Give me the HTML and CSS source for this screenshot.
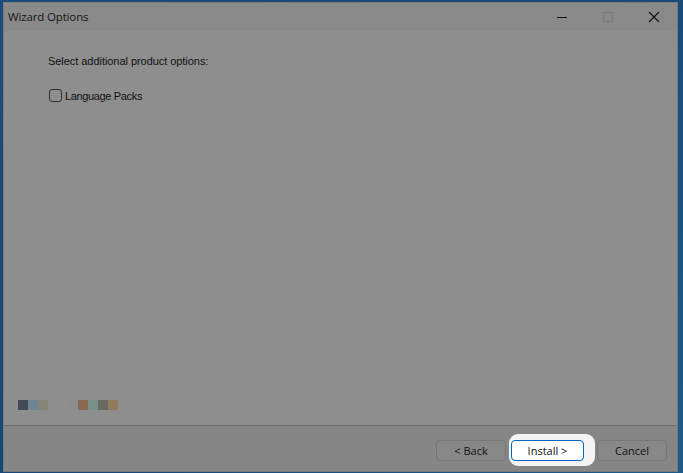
FILE: index.html
```html
<!DOCTYPE html>
<html>
<head>
<meta charset="utf-8">
<link rel="stylesheet" href="styles.css">
</head>
<body>
<div class="desktop">
  <div class="window">
    <div class="titlebar">
      <span class="title">Wizard Options</span>
      <div class="controls">
        <span class="ctl"><svg width="12" height="12" viewBox="0 0 12 12"><path d="M1 6.5H11" stroke="#111" stroke-width="1"/></svg></span>
        <span class="ctl"><svg width="12" height="12" viewBox="0 0 12 12"><rect x="1.5" y="1.5" width="9" height="9" rx="1" fill="none" stroke="#7a7a7a" stroke-width="1"/></svg></span>
        <span class="ctl"><svg width="12" height="12" viewBox="0 0 12 12"><path d="M1 1L11 11M11 1L1 11" stroke="#111" stroke-width="1.1"/></svg></span>
      </div>
    </div>
    <div class="content">
      <div class="main">
        <p class="prompt">Select additional product options:</p>
        <label class="option"><span class="box"></span>Language Packs</label>
      </div>
      <div class="swatches">
        <span class="sw" style="background:#434955"></span>
        <span class="sw" style="background:#6e8393"></span>
        <span class="sw" style="background:#848577"></span>
        <span class="gap"></span>
        <span class="sw" style="background:#8d8d8d"></span>
        <span class="sw" style="background:#8a684f"></span>
        <span class="sw" style="background:#798f8b"></span>
        <span class="sw" style="background:#6a6961"></span>
        <span class="sw" style="background:#8e7c5d"></span>
        <span class="sw" style="background:#8e8e8e"></span>
      </div>
    </div>
    <div class="footer">
      <button class="btn">&lt; Back</button>
      <span class="focus-wrap"><button class="btn primary">Install &gt;</button></span>
      <button class="btn">Cancel</button>
    </div>
  </div>
</div>
</body>
</html>
```
FILE: styles.css
```css
html, body {
  margin: 0;
  padding: 0;
  width: 683px;
  height: 473px;
  overflow: hidden;
}
body {
  background: linear-gradient(135deg, #1d4b7a 0%, #174775 50%, #1f5a8a 100%);
  font-family: "Liberation Sans", "DejaVu Sans", sans-serif;
}
.desktop {
  padding: 2px 5px 1px 3px;
  height: 473px;
  box-sizing: border-box;
}
.window {
  height: 470px;
  display: flex;
  flex-direction: column;
  background: #8e8e8e;
  border: 1px solid #7a7a7a;
  box-sizing: border-box;
}
.titlebar {
  height: 28px;
  background: #898989;
  display: flex;
  align-items: center;
  justify-content: space-between;
  padding-left: 4px;
  flex: none;
}
.title {
  font-size: 11.5px;
  color: #161616;
  font-family: "Open Sans", "Liberation Sans", sans-serif;
  letter-spacing: -0.15px;
  margin-top: -2px;
}
.controls {
  display: flex;
  height: 28px;
}
.ctl {
  width: 46px;
  display: flex;
  align-items: center;
  justify-content: center;
}
.content {
  flex: 1;
  display: flex;
  flex-direction: column;
  justify-content: space-between;
  border-bottom: 1px solid #6c6c6c;
  box-shadow: 0 1px 0 #979797;
}
.main {
  padding: 24px 0 0 44px;
}
.prompt {
  margin: 0;
  color: #111;
  font-family: "Liberation Sans", "DejaVu Sans", sans-serif;
  font-size: 11px;
  letter-spacing: -0.05px;
}
.option {
  display: flex;
  align-items: center;
  margin-top: 22px;
  margin-left: 1px;
  font-family: "Liberation Sans", "DejaVu Sans", sans-serif;
  font-size: 11px;
  letter-spacing: -0.35px;
  color: #111;
}
.box {
  width: 11px;
  height: 11px;
  border: 1px solid #2e2e2e;
  border-radius: 3px;
  margin-right: 3px;
  background: #8e8e8e;
}
.swatches {
  display: flex;
  padding: 0 0 15px 14px;
}
.sw {
  width: 10px;
  height: 10px;
}
.gap {
  width: 20px;
}
.footer {
  height: 45px;
  background: #868686;
  display: flex;
  align-items: flex-start;
  justify-content: flex-end;
  padding-right: 10px;
  flex: none;
  box-sizing: border-box;
  padding-top: 8px;
}
.btn {
  width: 70px;
  height: 21px;
  border: 1px solid #777;
  border-radius: 4px;
  background: #888888;
  font-family: "Open Sans", "Liberation Sans", sans-serif;
  font-size: 11px;
  color: #111;
  padding: 0;
}
.footer > .btn {
  margin-top: 6px;
}
.focus-wrap {
  background: #f4f4f4;
  border-radius: 9px;
  padding: 6px 11px 5px 2px;
  margin: 0 2px 0 3px;
  display: flex;
}
.btn.primary {
  width: 73px;
  height: 21px;
  background: #fff;
  border: 1px solid #0067c0;
}
```
